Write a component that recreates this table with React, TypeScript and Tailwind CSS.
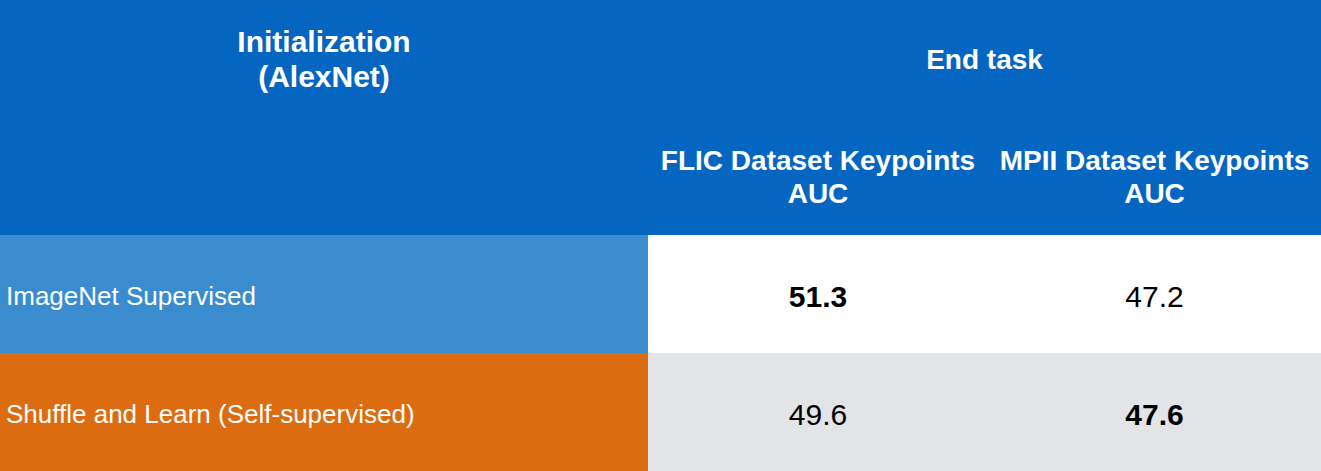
import React from "react";

const font = { fontFamily: '"Liberation Sans", Arial, Helvetica, sans-serif' };

export default function App() {
  return (
    <div
      className="w-[1321px] h-[471px] grid grid-cols-[648px_340px_333px] grid-rows-[118px_117px_118px_118px] overflow-hidden"
      style={font}
    >
      <div className="row-span-2 bg-[#0466c1] text-white font-bold text-[30px] leading-[35px] text-center pt-[24px]">
        Initialization
        <br />
        (AlexNet)
      </div>
      <div className="col-span-2 bg-[#0466c1] text-white font-bold text-[28px] flex items-center justify-center pt-[2px]">
        End task
      </div>
      <div className="bg-[#0466c1] text-white font-bold text-[28px] leading-[33px] text-center flex items-center justify-center">
        <span>
          FLIC Dataset Keypoints
          <br />
          AUC
        </span>
      </div>
      <div className="bg-[#0466c1] text-white font-bold text-[28px] leading-[33px] text-center flex items-center justify-center">
        <span>
          MPII Dataset Keypoints
          <br />
          AUC
        </span>
      </div>

      <div className="bg-[#3a8ccf] text-white text-[26px] flex items-center pl-[6px] pt-[4px]">
        ImageNet Supervised
      </div>
      <div className="bg-white text-black text-[30px] font-bold flex items-center justify-center pt-[4px]">
        51.3
      </div>
      <div className="bg-white text-black text-[30px] flex items-center justify-center pt-[4px]">
        47.2
      </div>

      <div className="bg-[#dd6b10] text-white text-[26px] flex items-center pl-[6px] pt-[4px]">
        Shuffle and Learn (Self-supervised)
      </div>
      <div className="bg-[#e3e4e8] text-black text-[30px] flex items-center justify-center pt-[4px]">
        49.6
      </div>
      <div className="bg-[#e3e4e8] text-black text-[30px] font-bold flex items-center justify-center pt-[4px]">
        47.6
      </div>
    </div>
  );
}
